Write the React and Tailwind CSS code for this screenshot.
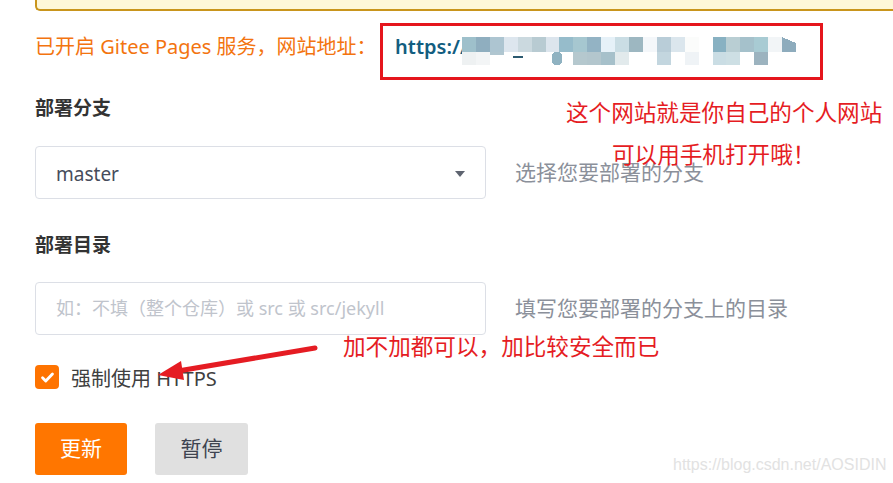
import React from 'react';

const row1 = [
  '#9ec0cb', '#8faebf', '#adc5d1', '#dde6ee', '#cbd9df', '#b8cbd2', '#dce5ed', '#96bccb',
  '#a6c7d0', '#93b3c4', '#e6f1f8', '#cadde4', '#9db7c1', '#f4f7fa', '#b9cdd8', '#dbe6ed',
  '#fbfcfb', '#ffffff', '#88b1c2', '#b9ced3', '#a5c1cb', '#a8cbd3', '#f2f5f7', '#8eacbd',
];
const row2 = [
  '#eef1f2', '#f3f5f6', '#ffffff', '#ffffff', '#ffffff', '#ffffff', '#ffffff', '#ffffff',
  '#b5c8ce', '#b3c6cd', '#a6c0ca', '#e2eaec', '#ffffff', '#ffffff', '#c3d6df', '#ffffff',
  '#eff3f6', '#ffffff', '#cadde4', '#cddfe4', '#ffffff', '#9cb3bf', '#ffffff', '#ffffff',
];

const Mosaic = () => (
  <svg width="334" height="28" viewBox="0 0 334 28" shapeRendering="crispEdges">
    {row1.map((c, i) => (
      <rect key={`a${i}`} x={i * 13.92} y="0" width="14" height="15" fill={c} />
    ))}
    {row2.map((c, i) => (
      <rect key={`b${i}`} x={i * 13.92} y="15" width="14" height="13" fill={c} />
    ))}
    {/* leftover bits of the blurred address */}
    <rect x="90" y="15" width="10" height="13" rx="4" fill="#8fb2c1" />
    <rect x="28" y="15" width="14" height="3" fill="#b0c6d0" />
    <rect x="51" y="19" width="10" height="1.5" fill="#2c5a70" />
    <polygon points="320,0 334,0 334,6" fill="#ffffff" />
  </svg>
);

const Check = () => (
  <svg width="17" height="17" viewBox="0 0 24 24" fill="none">
    <path d="M5 12.5l4.5 4.5L19 7" stroke="#fff" strokeWidth="4" strokeLinecap="round" strokeLinejoin="round" />
  </svg>
);

const App = () => {
  return (
    <div className="relative w-[893px] h-[483px] overflow-hidden bg-white font-['Noto_Sans','Noto_Sans_CJK_SC',sans-serif]">
      {/* Notice box cut off at the top */}
      <div className="ml-[35px] w-[900px] h-[11px] bg-[#fef7d8] border-l-2 border-b-2 border-[#c9951c] rounded-bl-[5px]" />

      {/* Pages address */}
      <div className="flex items-start mt-[12px]">
        <div className="w-[380px] shrink-0 pl-[35px] mt-[12px] text-[20px] leading-[24px] text-[#f3740f] whitespace-nowrap">
          已开启 Gitee Pages 服务，网站地址：
        </div>
        <div className="w-[443px] h-[57px] shrink-0 border-[3px] border-[#e5161d] flex items-start pl-[12px]">
          <span className="w-[67px] mt-[9px] text-[20px] leading-[24px] font-semibold text-[#125d80] whitespace-nowrap">
            https://
          </span>
          <div className="mt-[11px]">
            <Mosaic />
          </div>
        </div>
      </div>

      <div className="pl-[35px]">
        {/* Branch */}
        <h4 className="mt-[16px] text-[19px] leading-[24px] font-bold text-[#333]">部署分支</h4>
        <div className="flex items-center mt-[26px]">
          <div className="w-[451px] h-[53px] border border-[#dcdfe6] rounded-[4px] flex items-center justify-between pl-[20px] pr-[20px]">
            <span className="text-[19px] mt-[3px] text-[#464c5b]">master</span>
            <span className="w-0 h-0 border-l-[5px] border-r-[5px] border-t-[6px] border-l-transparent border-r-transparent border-t-[#5e6470] mt-[3px]" />
          </div>
          <span className="ml-[29px] text-[21px] text-[#8b909a]">选择您要部署的分支</span>
        </div>

        {/* Directory */}
        <h4 className="mt-[34px] text-[19px] leading-[24px] font-bold text-[#333]">部署目录</h4>
        <div className="flex items-center mt-[25px]">
          <div className="w-[451px] h-[53px] border border-[#dcdfe6] rounded-[4px] flex items-center pl-[20px]">
            <span className="text-[18px] text-[#c0c4cc] whitespace-nowrap">如：不填（整个仓库）或 src 或 src/jekyll</span>
          </div>
          <span className="ml-[29px] text-[21px] text-[#8b909a]">填写您要部署的分支上的目录</span>
        </div>

        {/* Force HTTPS */}
        <div className="flex items-center mt-[30px] h-[24px]">
          <span className="w-[24px] h-[24px] rounded-[4px] bg-[#fe7300] flex items-center justify-center">
            <Check />
          </span>
          <span className="ml-[12px] mt-[4px] text-[20px] text-[#404040]">强制使用 HTTPS</span>
        </div>

        {/* Actions */}
        <div className="flex gap-[28px] mt-[34px]">
          <button className="w-[92px] h-[52px] rounded-[3px] bg-[#ff7600] text-white text-[21px]">更新</button>
          <button className="w-[93px] h-[52px] rounded-[3px] bg-[#e0e0e0] text-[#3f4450] text-[21px]">暂停</button>
        </div>
      </div>

      {/* Red annotations laid over the page */}
      <div className="absolute left-[566px] top-[100px] text-[22.6px] leading-[26px] text-[#e51c23] whitespace-nowrap">
        这个网站就是你自己的个人网站
      </div>
      <div className="absolute left-[612px] top-[142px] text-[22.6px] leading-[26px] text-[#e51c23] whitespace-nowrap">
        可以用手机打开哦！
      </div>
      <div className="absolute left-[343px] top-[334px] text-[22.6px] leading-[26px] text-[#e51c23] whitespace-nowrap">
        加不加都可以，加比较安全而已
      </div>
      <svg className="absolute left-0 top-0" width="893" height="483" viewBox="0 0 893 483" fill="none">
        <line x1="315" y1="348" x2="178" y2="371" stroke="#e51c23" strokeWidth="5" strokeLinecap="round" />
        <polygon points="158,375 181,361 184,380" fill="#e51c23" />
      </svg>

      {/* Watermark */}
      <div className="absolute left-[673px] top-[455px] text-[16px] leading-[20px] text-[#e2e2e2] font-['Liberation_Sans',Arial,sans-serif] whitespace-nowrap">
        https://blog.csdn.net/AOSIDIN
      </div>
    </div>
  );
};

export default App;
